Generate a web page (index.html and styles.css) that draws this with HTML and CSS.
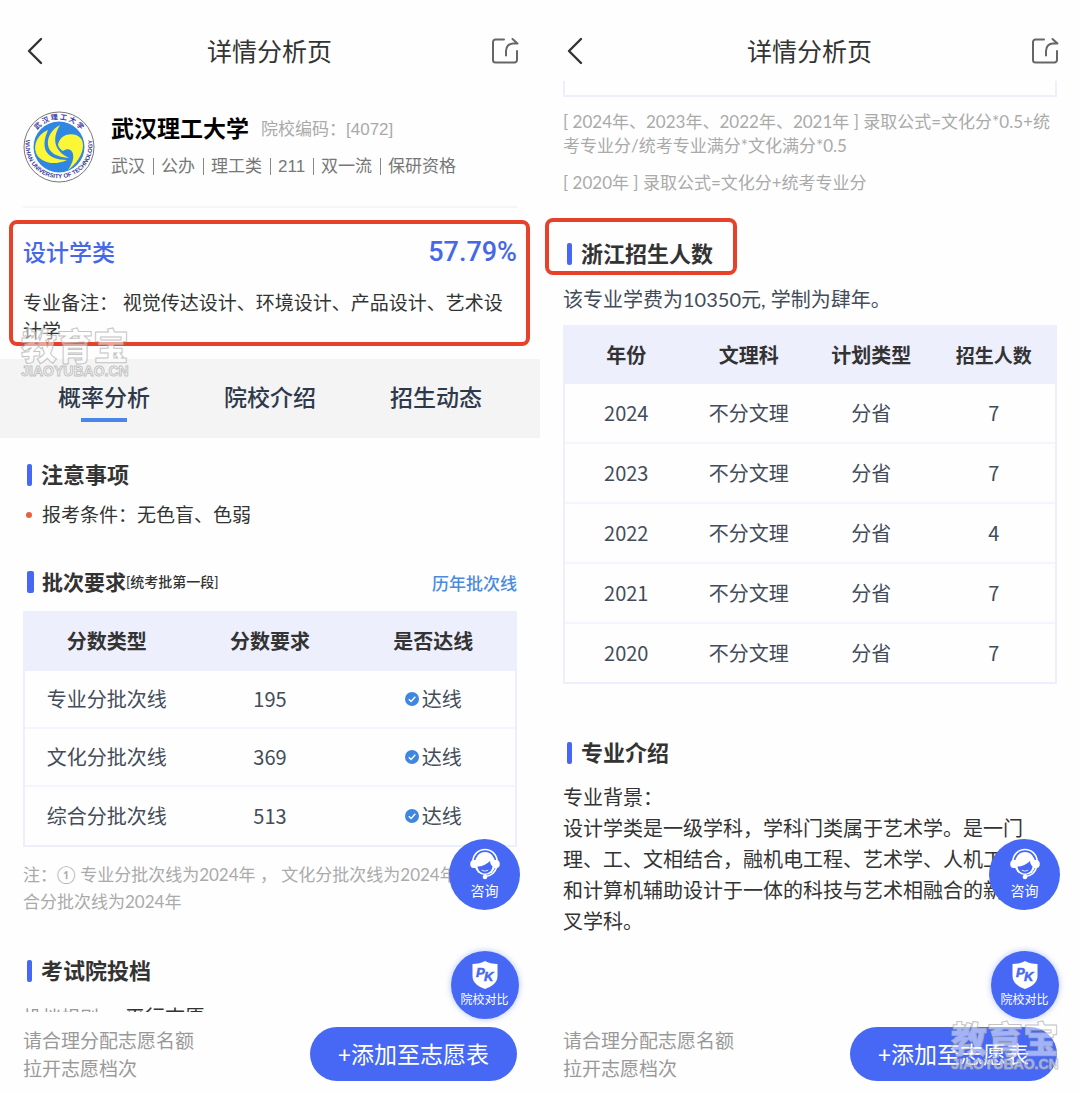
FILE: index.html
```html
<!DOCTYPE html>
<html lang="zh-CN">
<head>
  <meta charset="UTF-8" />
  <meta name="viewport" content="width=device-width, initial-scale=1.0" />
  <title>详情分析页</title>
  <link rel="stylesheet" href="styles.css">
</head>
<body>
  <!-- shared icons -->
  <svg class="sprite" width="0" height="0" aria-hidden="true">
    <symbol id="icon-back" viewBox="0 0 16 28">
      <path d="M14 2 2 14l12 12" fill="none" stroke="#333" stroke-width="2.4" stroke-linecap="round" stroke-linejoin="round" />
    </symbol>
    <symbol id="icon-share" viewBox="0 0 28 28">
      <path d="M13 2.500H4.500a2.500 2.500 0 0 0-2.500 2.500v18a2.500 2.500 0 0 0 2.500 2.500h19a2.500 2.500 0 0 0 2.500-2.500V14M15 18.500v-4.500c0-4.500 3-7.500 7-7.500h4.500M21.500 2l5 4.500" fill="none" stroke="#666" stroke-width="2" stroke-linecap="round" stroke-linejoin="round" />
    </symbol>
    <symbol id="icon-check" viewBox="0 0 14 14">
      <circle cx="7" cy="7" r="7" fill="#3f86e0" />
      <path d="M3.800 7.200l2.300 2.200 4.200-4.600" fill="none" stroke="#fff" stroke-width="1.400" />
    </symbol>
    <symbol id="icon-service" viewBox="0 0 32 32">
      <path d="M4 13a12 11.500 0 0 1 24 0" fill="none" stroke="#fff" stroke-width="1.600" />
      <path d="M6 15a10 11 0 0 1 20 0v3a10 9 0 0 1-20 0z" fill="#fff" />
      <path d="M5 12h2v8H4.500A3.500 4 0 0 1 5 12zM27 12h-2v8h2.500a3.500 4 0 0 0-.5-8z" fill="#fff" />
      <path d="M8.500 18.500c5 0 9-2 12.500-5.500.3 2.500 1 4 2.500 5.500-.5 4.500-4 7-7.500 7s-7-2.500-7.500-7z" fill="#4668f5" />
      <path d="M12.500 21.500c2 1.500 5 1.500 7 0-.5 2.500-6.500 2.500-7 0z" fill="#fff" />
      <path d="M27.500 19.500c-1.500 5-5 8-10.500 9" fill="none" stroke="#fff" stroke-width="1.600" />
      <circle cx="16" cy="29" r="2.300" fill="#fff" />
    </symbol>
    <symbol id="icon-pk" viewBox="0 0 26 28">
      <path d="M13 0c3 2 8 3 12.500 3v12c0 7-6 10.500-12.500 13C6.500 25.500.5 22 .5 15V3C5 3 10 2 13 0z" fill="#fff" />
      <text x="4" y="16" font-family="Liberation Sans, sans-serif" font-size="13" font-weight="bold" font-style="italic" fill="#4668f5" stroke="#4668f5" stroke-width=".5">P<tspan x="12" y="20">K</tspan></text>
    </symbol>
  </svg>

  <div class="board">
    <section class="phone">
      <header class="topbar">
        <button class="icon-btn" aria-label="返回"><svg width="16" height="28"><use href="#icon-back" /></svg></button>
        <h1>详情分析页</h1>
        <button class="icon-btn" aria-label="分享"><svg width="28" height="28"><use href="#icon-share" /></svg></button>
      </header>

      <main class="content">
        <div class="school">
          <svg class="school-logo" viewBox="0 0 72 72" role="img" aria-label="武汉理工大学校徽">
            <defs>
              <path id="arc-top" d="M8.500 36a27.500 27.500 0 0 1 55 0" />
              <path id="arc-bottom" d="M3 28a33.500 33.500 0 1 0 66 0" />
            </defs>
            <circle cx="36" cy="36" r="35" fill="#fff" stroke="#777" stroke-width="1" />
            <circle cx="36" cy="36" r="25.500" fill="#2f87e2" />
            <path d="M25 19C15 23 10 33 13 42c3 8 16 14 31 7-10 0-18-3-21-9-3-7-1-14 2-21z" fill="#fbf737" />
            <path d="M37 14c-8 4-13 12-12 20 1 8 9 12 21 13-6-3-11-7-13-13-2-7 0-13 4-20z" fill="#fbf737" />
            <path d="M35 34c1-6 5-10 11-10.500 8-1 14 3 14 11 0 9-7 19-15 24.500 4-6 6-11 5-16-1-5-6-6-10-3-2-1-4-3-5-6z" fill="#fbf737" />
            <text class="seal-cn"><textPath href="#arc-top" startOffset="50%" text-anchor="middle">武 汉 理 工 大 学</textPath></text>
            <text class="seal-en"><textPath href="#arc-bottom" startOffset="50%" text-anchor="middle">WUHAN UNIVERSITY OF TECHNOLOGY</textPath></text>
          </svg>
          <div class="school-info">
            <div class="school-name">
              <h2>武汉理工大学</h2>
              <span class="school-code">院校编码：[4072]</span>
            </div>
            <ul class="school-tags">
              <li>武汉</li>
              <li>公办</li>
              <li>理工类</li>
              <li>211</li>
              <li>双一流</li>
              <li>保研资格</li>
            </ul>
          </div>
        </div>

        <div class="major marked">
          <div class="major-head">
            <h2>设计学类</h2>
            <strong class="rate">57.79%</strong>
          </div>
          <p class="major-note">专业备注： 视觉传达设计、环境设计、产品设计、艺术设计学</p>
        </div>

        <nav class="tabs">
          <a class="tab active" href="#">概率分析</a>
          <a class="tab" href="#">院校介绍</a>
          <a class="tab" href="#">招生动态</a>
        </nav>

        <div class="panel">
          <h3 class="title">注意事项</h3>
          <ul class="notice">
            <li>报考条件：无色盲、色弱</li>
          </ul>

          <div class="title-row">
            <h3 class="title">批次要求<small>[统考批第一段]</small></h3>
            <a class="more" href="#">历年批次线</a>
          </div>
          <table class="table score-table">
            <thead>
              <tr><th>分数类型</th><th>分数要求</th><th>是否达线</th></tr>
            </thead>
            <tbody>
              <tr><td>专业分批次线</td><td>195</td><td><span class="pass"><svg width="14" height="14"><use href="#icon-check" /></svg>达线</span></td></tr>
              <tr><td>文化分批次线</td><td>369</td><td><span class="pass"><svg width="14" height="14"><use href="#icon-check" /></svg>达线</span></td></tr>
              <tr><td>综合分批次线</td><td>513</td><td><span class="pass"><svg width="14" height="14"><use href="#icon-check" /></svg>达线</span></td></tr>
            </tbody>
          </table>
          <p class="remark">注：① 专业分批次线为2024年 ， 文化分批次线为2024年 ，综<br>合分批次线为2024年</p>

          <h3 class="title title-cast">考试院投档</h3>
          <p class="rule"><span>投档规则：</span>平行志愿</p>
        </div>
      </main>

      <footer class="bottombar">
        <p>请合理分配志愿名额<br>拉开志愿档次</p>
        <button class="add-btn">+添加至志愿表</button>
      </footer>

      <div class="fabs">
        <button class="fab fab-service"><svg width="32" height="32"><use href="#icon-service" /></svg>咨询</button>
        <button class="fab fab-pk"><svg width="26" height="28"><use href="#icon-pk" /></svg>院校对比</button>
      </div>
      <div class="watermark watermark-left"><b>教育宝</b><span>JIAOYUBAO.CN</span></div>
    </section>

    <section class="phone">
      <header class="topbar">
        <button class="icon-btn" aria-label="返回"><svg width="16" height="28"><use href="#icon-back" /></svg></button>
        <h1>详情分析页</h1>
        <button class="icon-btn" aria-label="分享"><svg width="28" height="28"><use href="#icon-share" /></svg></button>
      </header>

      <main class="content content-scrolled">
        <div class="table-tail"></div>
        <p class="formula">[ 2024年、2023年、2022年、2021年 ] 录取公式=文化分*0.5+统<br>考专业分/统考专业满分*文化满分*0.5</p>
        <p class="formula">[ 2020年 ] 录取公式=文化分+统考专业分</p>

        <h3 class="title title-enroll marked">浙江招生人数</h3>
        <p class="fee">该专业学费为10350元, 学制为肆年。</p>
        <table class="table enroll-table">
          <thead>
            <tr><th>年份</th><th>文理科</th><th>计划类型</th><th>招生人数</th></tr>
          </thead>
          <tbody>
            <tr><td>2024</td><td>不分文理</td><td>分省</td><td>7</td></tr>
            <tr><td>2023</td><td>不分文理</td><td>分省</td><td>7</td></tr>
            <tr><td>2022</td><td>不分文理</td><td>分省</td><td>4</td></tr>
            <tr><td>2021</td><td>不分文理</td><td>分省</td><td>7</td></tr>
            <tr><td>2020</td><td>不分文理</td><td>分省</td><td>7</td></tr>
          </tbody>
        </table>

        <h3 class="title title-intro">专业介绍</h3>
        <p class="intro">专业背景：<br>设计学类是一级学科，学科门类属于艺术学。是一门理、工、文相结合，融机电工程、艺术学、人机工程学和计算机辅助设计于一体的科技与艺术相融合的新型交叉学科。</p>
      </main>

      <footer class="bottombar">
        <p>请合理分配志愿名额<br>拉开志愿档次</p>
        <button class="add-btn">+添加至志愿表</button>
      </footer>

      <div class="fabs">
        <button class="fab fab-service"><svg width="32" height="32"><use href="#icon-service" /></svg>咨询</button>
        <button class="fab fab-pk"><svg width="26" height="28"><use href="#icon-pk" /></svg>院校对比</button>
      </div>
      <div class="watermark watermark-right"><b>教育宝</b><span>JIAOYUBAO.CN</span></div>
    </section>
  </div>
</body>
</html>
```
FILE: styles.css
```css
* {
  box-sizing: border-box;
  margin: 0;
  padding: 0;
}

body {
  font-family: Lato, "Noto Sans CJK SC", sans-serif;
  background-color: #fefefe;
  color: #333;
}

button {
  font-family: inherit;
  border: none;
  background: none;
  cursor: pointer;
}

a {
  text-decoration: none;
}

ul {
  list-style: none;
}

svg {
  display: block;
  flex-shrink: 0;
}

.sprite {
  position: absolute;
}

.board {
  display: grid;
  grid-template-columns: 1fr 1fr;
}

.phone {
  position: relative;
  display: flex;
  flex-direction: column;
  height: 100vh;
  min-width: 0;
}

/* top bar */
.topbar {
  display: flex;
  align-items: center;
  justify-content: space-between;
  padding: 31px 21px 10px 27px;
}

.topbar h1 {
  flex: 1;
  padding-left: 5px;
  font-size: 25px;
  line-height: 40px;
  font-weight: 400;
  text-align: center;
}

.icon-btn {
  display: flex;
  width: 28px;
}

.icon-btn:first-child {
  width: 16px;
}

.content {
  flex: 1;
  min-height: 0;
  overflow: hidden;
}

/* school */
.school {
  display: flex;
  gap: 16px;
  margin: 0 23px;
  padding: 30px 0 23px;
  border-bottom: 2px solid #f6f6f6;
}

.school-logo {
  width: 72px;
  height: 72px;
}

.seal-cn {
  font-family: "Noto Sans CJK SC", sans-serif;
  font-size: 7px;
  font-weight: bold;
  fill: #3b3a9c;
}

.seal-en {
  font-family: "Liberation Sans", sans-serif;
  font-size: 6px;
  font-weight: bold;
  fill: #3b3a9c;
}

.school-name {
  display: flex;
  align-items: flex-start;
  gap: 12px;
}

.school-name h2 {
  font-size: 23px;
  line-height: 34px;
  font-weight: 700;
  color: #000;
}

.school-code {
  font-family: "Liberation Sans", "Noto Sans CJK SC", sans-serif;
  font-size: 17px;
  line-height: 38px;
  color: #aaa;
}

.school-tags {
  display: flex;
  align-items: center;
  height: 34px;
  font-family: "Liberation Sans", "Noto Sans CJK SC", sans-serif;
  font-size: 17px;
  line-height: 17px;
  color: #777;
}

.school-tags li + li {
  margin-left: 8px;
  padding-left: 7px;
  border-left: 1px solid #888;
}

/* major */
.major {
  padding: 27px 23px 14px;
}

.major-head {
  display: flex;
  justify-content: space-between;
  line-height: 34px;
  color: #4668e8;
}

.major-head h2 {
  font-size: 23px;
  font-weight: 500;
}

.rate {
  font-family: Roboto, sans-serif;
  font-size: 27px;
  font-weight: 500;
}

.major-note {
  margin-top: 20px;
  font-size: 19px;
  line-height: 28px;
}

.marked {
  position: relative;
}

.marked::after {
  content: "";
  position: absolute;
  border: 4px solid #e8412a;
  border-radius: 8px;
}

.major.marked::after {
  inset: 12px 10px 13px 9px;
}

/* tabs */
.tabs {
  display: grid;
  grid-template-columns: repeat(3, 1fr);
  padding: 21px 21px 16px;
  background-color: #f4f4f4;
}

.tab {
  display: flex;
  flex-direction: column;
  align-items: center;
  gap: 4px;
  font-size: 23px;
  line-height: 34px;
  font-weight: 500;
  color: #2e3a4c;
}

.tab::after {
  content: "";
  width: 46px;
  height: 4px;
}

.tab.active::after {
  background-color: #4a86e8;
}

/* sections */
.panel {
  padding: 22px 23px 0;
}

.title {
  display: flex;
  align-items: center;
  padding-left: 4px;
  font-size: 22px;
  line-height: 30px;
  font-weight: 700;
}

.title::before {
  content: "";
  width: 5px;
  height: 22px;
  margin-right: 9px;
  border-radius: 2px;
  background-color: #4668f5;
}

.notice {
  margin-top: 10px;
}

.notice li {
  display: flex;
  align-items: center;
  padding-left: 3px;
  font-size: 19px;
  line-height: 30px;
}

.notice li::before {
  content: "";
  width: 6px;
  height: 6px;
  margin-right: 10px;
  border-radius: 50%;
  background-color: #e8603c;
}

.title-row {
  display: flex;
  align-items: center;
  justify-content: space-between;
  margin: 37px 0 14px;
}

.title-row .title {
  font-size: 21px;
}

.title-row .title::before {
  width: 7px;
  margin-right: 8px;
}

.title small {
  font-size: 14px;
  font-weight: 500;
}

.more {
  font-size: 17px;
  font-weight: 500;
  color: #4a8be0;
}

.table {
  width: 100%;
  table-layout: fixed;
  border: 2px solid #eeeffc;
  border-spacing: 0;
  font-family: "Noto Sans CJK SC", sans-serif;
  font-size: 20px;
  line-height: 30px;
  text-align: center;
}

.table th {
  height: 57px;
  padding-bottom: 2px;
  background-color: #eeeffc;
  font-weight: 700;
}

.table td {
  height: 58px;
  border-bottom: 2px solid #f4f5fd;
  color: #444c5a;
}

.table tr:last-child td {
  border-bottom: none;
}

.score-table th {
  height: 58px;
}

.enroll-table td {
  height: 60px;
}

.enroll-table tr:last-child td {
  height: 58px;
}

.enroll-table th:last-child {
  font-size: 19px;
}

.pass {
  display: flex;
  align-items: center;
  justify-content: center;
  gap: 3px;
}

.remark {
  margin-top: 14px;
  font-size: 17px;
  line-height: 27px;
  color: #aaa;
}

.title-cast {
  margin-top: 41px;
}

.rule {
  margin-top: 16px;
  font-size: 20px;
  line-height: 30px;
}

.rule span {
  margin-right: 7px;
  font-size: 19px;
  color: #999;
}

/* scrolled page */
.content-scrolled {
  padding: 0 23px;
}

.table-tail {
  height: 16px;
  border: 2px solid #eeeffc;
  border-top: none;
}

.formula {
  margin-top: 13px;
  font-size: 17px;
  line-height: 24px;
  color: #aaa;
}

.title-enroll {
  width: fit-content;
  margin-top: 44px;
}

.title-enroll.marked::after {
  inset: -21px -24px -6px -18px;
}

.fee {
  margin: 15px 0 11px;
  font-size: 20px;
  line-height: 30px;
  color: #444c5a;
}

.title-intro {
  margin-top: 54px;
}

.intro {
  margin-top: 14px;
  font-size: 20px;
  line-height: 31px;
}

/* bottom bar */
.bottombar {
  display: flex;
  justify-content: space-between;
  align-items: flex-start;
  padding: 15px 23px 10px;
}

.bottombar p {
  font-size: 19px;
  line-height: 28px;
  color: #999;
}

.add-btn {
  padding: 0 28px;
  border-radius: 28px;
  background-color: #4668f5;
  color: #fff;
  font-size: 23px;
  line-height: 54px;
}

/* floating buttons */
.fabs {
  position: absolute;
  right: 20px;
  bottom: 74px;
  display: flex;
  flex-direction: column;
  align-items: center;
  gap: 41px;
}

.fab {
  display: flex;
  flex-direction: column;
  align-items: center;
  justify-content: center;
  border-radius: 50%;
  background-color: #4668f5;
  color: #fff;
}

.fab-service {
  width: 71px;
  height: 71px;
  gap: 1px;
  font-size: 14px;
  line-height: 20px;
}

.fab-pk {
  width: 68px;
  height: 68px;
  gap: 2px;
  font-size: 12px;
  line-height: 18px;
  box-shadow: 0 0 6px rgba(70, 104, 245, 0.4);
}

/* watermark */
.watermark {
  position: absolute;
  display: flex;
  flex-direction: column;
  align-items: center;
  color: rgba(255, 255, 255, 0.5);
  -webkit-text-stroke: 1px rgba(170, 170, 170, 0.7);
  pointer-events: none;
}

.watermark b {
  font-size: 36px;
  line-height: 34px;
  font-weight: 900;
}

.watermark span {
  font-family: "Liberation Sans", sans-serif;
  font-size: 14px;
  line-height: 16px;
  font-weight: bold;
}

.watermark-left {
  left: 21px;
  top: 329px;
}

.watermark-right {
  right: 21px;
  bottom: 21px;
}
```
